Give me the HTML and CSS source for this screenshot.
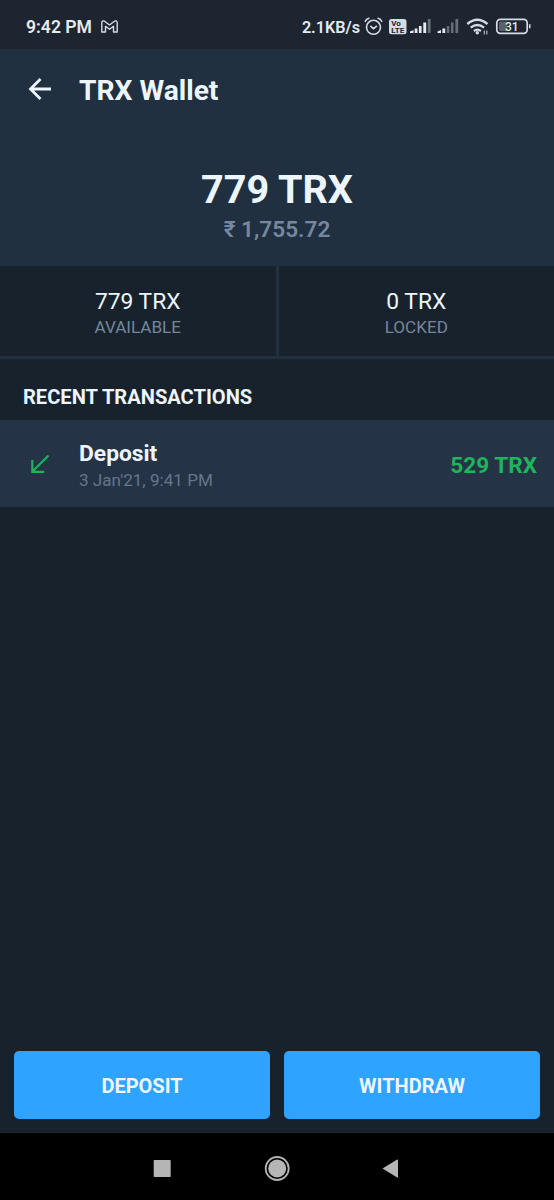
FILE: index.html
```html
<!DOCTYPE html>
<html lang="en">
<head>
  <meta charset="UTF-8">
  <meta name="viewport" content="width=device-width, initial-scale=1.0">
  <title>TRX Wallet</title>
  <link rel="stylesheet" href="styles.css">
</head>
<body>
  <div class="status-bar">
    <span class="time">9:42 PM</span>
    <svg class="mail" width="17" height="13" viewBox="0 0 17 13" fill="none" stroke="#d5dbe3" stroke-width="1.4" stroke-linejoin="round">
      <path d="M.8 2.2Q1.8.2 3.5 1.2L8.5 5l5-3.8Q15.2.2 16.2 2.2V12H12.5V6.3L8.5 9.3 4.5 6.3V12H.8Z"/>
    </svg>
    <span class="speed">2.1KB/s</span>
    <svg class="icons" width="170" height="24" viewBox="362 15 170 24">
      <!-- alarm -->
      <g fill="none" stroke="#d5dbe3" stroke-width="1.6" stroke-linecap="round">
        <circle cx="373.5" cy="27.3" r="7"/>
        <path d="M365.3 21.3q1-2.3 3.6-3M381.7 21.3q-1-2.3-3.6-3M370.8 26.3l2.7 2.4 2.9-2.4"/>
      </g>
      <!-- volte -->
      <rect x="389" y="19" width="17.500" height="15.300" rx="2.500" fill="#d5dbe3"/>
      <text class="volte" x="391.300" y="26">Vo</text>
      <text class="volte" x="391.300" y="33" textLength="13" lengthAdjust="spacingAndGlyphs">LTE</text>
      <!-- signal bars -->
      <g fill="#e6eaef">
        <path d="M410 33v-1.5l3.5-1.5v3zM414.7 28.500h2.700v4.500h-2.700zM418.900 26h2.700v7h-2.700zM423.300 22.500h2.900v10.500h-2.900z"/>
        <path d="M437.500 33v-1.500l3.500-1.500v3zM442.400 28.500h2.800v4.500h-2.800z"/>
        <path opacity=".38" d="M427.800 19h2.800v14h-2.800zM446.800 26h2.500v7h-2.500zM451 22.500h2.500v10.500H451zM455.400 19h2.800v14h-2.800z"/>
      </g>
      <!-- wifi -->
      <g fill="none" stroke="#d5dbe3" stroke-width="2.3">
        <path d="M467.300 24q10-8.500 20.200 0M470.700 27.700q6.700-5.400 13.400 0M473.900 31q3.500-2.700 7 0"/>
      </g>
      <circle cx="477.300" cy="32.800" r="1.700" fill="#d5dbe3"/>
      <path d="M484.300 30.500v4M486.800 30.500v4" stroke="#aab2bd" stroke-width="1.200"/>
      <!-- battery -->
      <rect x="496.800" y="19.300" width="30.400" height="14" rx="3.500" fill="none" stroke="#d5dbe3" stroke-width="1.700"/>
      <rect x="499" y="21.500" width="8.500" height="9.600" rx="1.500" fill="#59616c"/>
      <path d="M529 24.300h1.500v4H529z" fill="#d5dbe3"/>
      <text class="battery" x="505" y="30.600">31</text>
    </svg>
  </div>

  <header class="header">
    <div class="toolbar">
      <svg class="back" width="24" height="22" viewBox="0 0 24 22" fill="none" stroke="#edf6ff" stroke-width="2.8">
        <path d="M12.500 1L2.500 11l10 10M3 11h20"/>
      </svg>
      <h1>TRX Wallet</h1>
    </div>
    <div class="total">779 TRX</div>
    <div class="fiat">₹ 1,755.72</div>
  </header>

  <section class="balances">
    <div class="balance">
      <div class="amount">779 TRX</div>
      <div class="label">AVAILABLE</div>
    </div>
    <div class="balance">
      <div class="amount">0 TRX</div>
      <div class="label">LOCKED</div>
    </div>
  </section>

  <main class="transactions">
    <h2>RECENT TRANSACTIONS</h2>
    <div class="transaction">
      <svg class="arrow" width="20" height="20" viewBox="0 0 20 20" fill="none" stroke="#1fb35b" stroke-width="2.2">
        <path d="M18.500 1.500L2.500 17.500M2.300 6v11.900h11.900"/>
      </svg>
      <div class="info">
        <div class="type">Deposit</div>
        <div class="date">3 Jan'21, 9:41 PM</div>
      </div>
      <div class="value">529 TRX</div>
    </div>
  </main>

  <div class="actions">
    <button>DEPOSIT</button>
    <button>WITHDRAW</button>
  </div>

  <nav class="nav-bar">
    <svg width="554" height="67" viewBox="0 0 554 67" fill="#b5b5b5">
      <rect x="153.700" y="27" width="17" height="17" rx=".8"/>
      <circle cx="277.200" cy="35.500" r="9"/>
      <circle cx="277.200" cy="35.500" r="11.500" fill="none" stroke="#b5b5b5" stroke-width="1.800"/>
      <path d="M382.500 35.500L397.200 26.500Q398 26.300 398 27V44Q398 44.900 397.200 44.500Z"/>
    </svg>
  </nav>
</body>
</html>
```
FILE: styles.css
```css
* { box-sizing: border-box; }
body { margin: 0; height: 1200px; display: flex; flex-direction: column; overflow: hidden; background: #18222c; color: #edf6ff; font-family: Roboto, "Noto Sans", sans-serif; }
h1, h2 { margin: 0; }
svg { display: block; flex: none; }

.status-bar { height: 49px; padding: 4px 22px 0 26px; display: flex; align-items: center; background: #1c2530; color: #e6eaef; }
.time { font-size: 17.6px; font-weight: 600; width: 75px; white-space: nowrap; }
.speed { margin-left: auto; padding-top: 1px; font-size: 16.2px; font-weight: 600; }
.icons { margin-left: 2px; }
.volte { font-size: 8px; font-weight: 700; fill: #1c2530; }
.battery { font-size: 12px; font-weight: 500; fill: #e6eaef; }

.header { height: 217px; background: #213040; text-align: center; }
.toolbar { height: 80px; padding-left: 28px; display: flex; align-items: center; }
.toolbar h1 { margin: 2px 0 0 27px; font-size: 28.2px; font-weight: 700; }
.total { margin-top: 36px; font-size: 39.6px; line-height: 50px; font-weight: 700; }
.fiat { font-size: 22.6px; line-height: 29px; font-weight: 600; color: #7588a0; }

.balances { height: 93px; display: flex; gap: 3px; background: #213040; padding-bottom: 3px; }
.balance { flex: 1; padding-top: 22px; background: #18222c; text-align: center; }
.amount { font-size: 22.8px; line-height: 28px; }
.label { font-size: 17.1px; line-height: 22px; color: #75869b; }

.transactions { flex: 1; }
.transactions h2 { height: 61px; padding: 8px 23px 0; font-size: 20.1px; line-height: 60px; font-weight: 700; }
.transaction { height: 87px; padding: 0 17px 0 30px; display: flex; align-items: center; background: #243345; }
.info { margin-left: 29px; padding-top: 4px; flex: 1; }
.type { font-size: 22.8px; line-height: 28px; font-weight: 700; }
.date { font-size: 17.1px; line-height: 24px; color: #65768a; }
.value { padding-top: 4px; font-size: 22.6px; font-weight: 700; color: #1fb35b; }

.actions { height: 82px; padding: 0 14px 14px; display: flex; gap: 14px; }
.actions button { flex: 1; border: none; border-radius: 5px; padding: 2px 0 0; background: #2ea3ff; color: #edf6ff; font-family: inherit; font-size: 20px; font-weight: 700; }

.nav-bar { height: 67px; background: #000; }
```
